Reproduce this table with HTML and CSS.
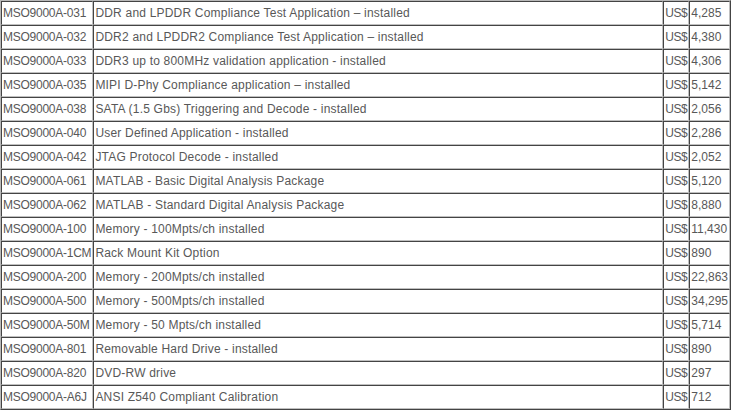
FILE: index.html
```html
<!DOCTYPE html>
<html>
<head>
<meta charset="utf-8">
<link rel="stylesheet" href="styles.css">
</head>
<body>
<table class="price-table">
<tr><td class="code">MSO9000A-031</td><td class="desc">DDR and LPDDR Compliance Test Application – installed</td><td class="cur">US$</td><td class="amt">4,285</td></tr>
<tr><td class="code">MSO9000A-032</td><td class="desc">DDR2 and LPDDR2 Compliance Test Application – installed</td><td class="cur">US$</td><td class="amt">4,380</td></tr>
<tr><td class="code">MSO9000A-033</td><td class="desc">DDR3 up to 800MHz validation application - installed</td><td class="cur">US$</td><td class="amt">4,306</td></tr>
<tr><td class="code">MSO9000A-035</td><td class="desc">MIPI D-Phy Compliance application – installed</td><td class="cur">US$</td><td class="amt">5,142</td></tr>
<tr><td class="code">MSO9000A-038</td><td class="desc">SATA (1.5 Gbs) Triggering and Decode - installed</td><td class="cur">US$</td><td class="amt">2,056</td></tr>
<tr><td class="code">MSO9000A-040</td><td class="desc">User Defined Application - installed</td><td class="cur">US$</td><td class="amt">2,286</td></tr>
<tr><td class="code">MSO9000A-042</td><td class="desc">JTAG Protocol Decode - installed</td><td class="cur">US$</td><td class="amt">2,052</td></tr>
<tr><td class="code">MSO9000A-061</td><td class="desc">MATLAB - Basic Digital Analysis Package</td><td class="cur">US$</td><td class="amt">5,120</td></tr>
<tr><td class="code">MSO9000A-062</td><td class="desc">MATLAB - Standard Digital Analysis Package</td><td class="cur">US$</td><td class="amt">8,880</td></tr>
<tr><td class="code">MSO9000A-100</td><td class="desc">Memory - 100Mpts/ch installed</td><td class="cur">US$</td><td class="amt">11,430</td></tr>
<tr><td class="code">MSO9000A-1CM</td><td class="desc">Rack Mount Kit Option</td><td class="cur">US$</td><td class="amt">890</td></tr>
<tr><td class="code">MSO9000A-200</td><td class="desc">Memory - 200Mpts/ch installed</td><td class="cur">US$</td><td class="amt">22,863</td></tr>
<tr><td class="code">MSO9000A-500</td><td class="desc">Memory - 500Mpts/ch installed</td><td class="cur">US$</td><td class="amt">34,295</td></tr>
<tr><td class="code">MSO9000A-50M</td><td class="desc">Memory - 50 Mpts/ch installed</td><td class="cur">US$</td><td class="amt">5,714</td></tr>
<tr><td class="code">MSO9000A-801</td><td class="desc">Removable Hard Drive - installed</td><td class="cur">US$</td><td class="amt">890</td></tr>
<tr><td class="code">MSO9000A-820</td><td class="desc">DVD-RW drive</td><td class="cur">US$</td><td class="amt">297</td></tr>
<tr><td class="code">MSO9000A-A6J</td><td class="desc">ANSI Z540 Compliant Calibration</td><td class="cur">US$</td><td class="amt">712</td></tr>
</table>
</body>
</html>
```

FILE: styles.css
```css
html, body {
  margin: 0;
  padding: 0;
  background: #ffffff;
}

.price-table {
  width: 731px;
  border-collapse: separate;
  border-spacing: 0;
  border-style: solid;
  border-width: 1px;
  border-color: #b8b8b8 #444444 #444444 #b8b8b8;
  font-family: "Liberation Sans", Arial, sans-serif;
  font-size: 12px;
  color: #585858;
}

.price-table td {
  height: 22px;
  padding: 0 1px;
  border-style: solid;
  border-width: 1px;
  border-color: #444444 #c0c0c0 #c0c0c0 #444444;
  vertical-align: middle;
  white-space: nowrap;
  line-height: 14px;
}

.price-table td.code {
  letter-spacing: -0.25px;
}

.price-table td.desc {
  width: 100%;
  letter-spacing: 0.2px;
}

.price-table td.cur {
  letter-spacing: -0.4px;
}
```
